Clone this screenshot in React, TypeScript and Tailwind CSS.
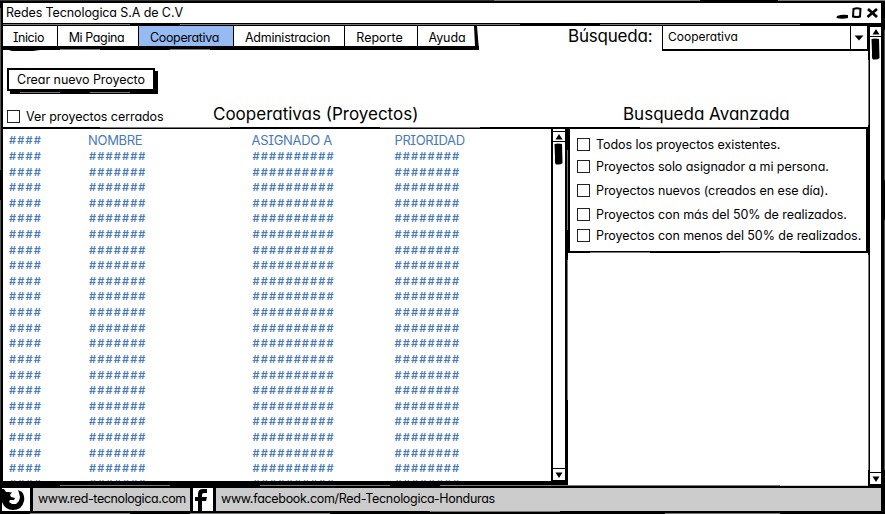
import React from "react";

const FONT = "font-['Inter','Liberation_Sans',sans-serif] [font-feature-settings:'cv11','cv08']";

function Check({ label, gap }: { label: string; gap: string }) {
  return (
    <label className={`flex h-[14px] items-center text-[12.5px] ${gap}`}>
      <span className="mr-[6px] size-[13px] shrink-0 border border-[#222] bg-white" />
      <span className="mt-[2px] tracking-[-0.06px]">{label}</span>
    </label>
  );
}

function ScrollBar() {
  return (
    <>
      <div className="flex h-[11px] shrink-0 items-center justify-center border-y-[1.5px] border-black">
        <svg width="8" height="6" viewBox="0 0 8 6"><path d="M4 0 7.5 5.5H.5Z" /></svg>
      </div>
      <svg className="ml-px mt-[1px] shrink-0" width="9" height="22" viewBox="0 0 9 22">
        <path d="M.5 1Q4 0 8 1L8.5 20Q7 22 2 21.4Q.6 21 1 15Z" />
      </svg>
      <div className="mt-auto flex h-[13px] shrink-0 items-center justify-center border-y-[1.5px] border-black">
        <svg width="8" height="6" viewBox="0 0 8 6"><path d="M.5.5H7.5L4 6Z" /></svg>
      </div>
    </>
  );
}

const columns = [
  { title: "####", cell: "####", width: "w-[80px]", head: "font-semibold text-[11px] tracking-[1.15px]" },
  { title: "NOMBRE", cell: "#######", width: "w-[163.5px]", head: "-ml-px text-[13px] tracking-[-0.3px]" },
  { title: "ASIGNADO A", cell: "##########", width: "w-[142px]", head: "-ml-px text-[13px] tracking-[-0.3px]" },
  { title: "PRIORIDAD", cell: "########", width: "w-[120px]", head: "text-[13px] tracking-[-0.4px]" },
];

const tabs = [
  { label: "Inicio", style: "w-[55px] border-r-[1.5px] pr-[3px] tracking-[-0.45px]" },
  { label: "Mi Pagina", style: "w-[81px] border-r-[1.5px] pr-[3px] tracking-[-0.4px]" },
  { label: "Cooperativa", style: "w-[95px] border-r-[1.5px] bg-[#95bbf2] pr-[3px] tracking-[-0.35px]" },
  { label: "Administracion", style: "w-[111px] border-r-[1.5px] pr-[3px] tracking-[-0.25px]" },
  { label: "Reporte", style: "w-[73px] border-r-[1.5px] pr-[3px]" },
  { label: "Ayuda", style: "w-[56px] pl-[2px] tracking-[-0.1px]" },
];

/* Lighter pencil passes that give the window frame its hand-drawn edge. */
function PencilStrokes() {
  return (
    <svg className="pointer-events-none absolute inset-0" width="885" height="514" fill="none" stroke="#777" strokeWidth="1">
      <path d="M0 .5H500" stroke="#333" />
      <path d="M494 .5H700M778 .5H885M3 24.5H130M180 24.5H420M420 24.5H520M600 24.5H800" />
      <path d="M.5 8V170M.5 200V440M884.5 30V180M884.5 220V470" stroke="#555" />
      <path d="M100 127.5H150M150 127.5H230M380 127.5H480M640 127.5H760M590 252.5H650M720 252.5H800" />
      <path d="M567.5 150V230M567.5 260V400M868.5 60V125M868.5 255V470" />
      <path d="M60 485.5H170M260 485.5H390M440 485.5H560M560 485.5H780" />
      <path d="M780 485.5H868" stroke="#ccc" />
      <path d="M30 513.5H130M190 513.5H330M430 511.5H560M665 513.5H780" />
      <path d="M60 49.5H100M170 49.5H210M20 92.5H60M90 92.5H130" />
      <path d="M0 46H3Q18 48 40 51H12Q5 49 3 47Z" fill="black" stroke="none" />
    </svg>
  );
}

export default function App() {
  return (
    <div className={`relative flex h-[514px] w-[885px] flex-col overflow-hidden whitespace-nowrap bg-white leading-none text-black ${FONT}`}>
      <div className="flex h-[485px] flex-col border-l-[3px] border-r-[4px] border-t-[3px] border-black">
        <header className="flex h-[23px] shrink-0 items-center justify-between border-b-[3px] border-black pl-[3px] text-[12.5px]">
          <span className="tracking-[-0.1px]">Redes Tecnologica S.A de C.V</span>
          <svg className="-mt-px" width="46" height="18" viewBox="0 0 46 18">
            <path d="M2 12Q7 10 13 11V14Q7 15.5 1.5 14Z" />
            <path d="M18.5 5Q22 3.5 25.5 5L25 12.5Q22 13.5 18 12.5Z" fill="none" stroke="black" strokeWidth="2" />
            <path d="M33 5 42 13M42 5 32.5 13" fill="none" stroke="black" strokeWidth="2.8" />
          </svg>
        </header>
        <div className="flex min-h-0 flex-1">
          <main className="flex w-[865px] flex-col">
            <div className="flex h-[25px] shrink-0">
              <nav className="flex h-[24px] border-b-[4px] border-black text-[12.5px]">
                {tabs.map((t) => (
                  <a key={t.label} className={`flex items-center justify-center border-black pt-[4px] ${t.style}`}>{t.label}</a>
                ))}
                <svg className="-mb-1 shrink-0" width="5" height="24" viewBox="0 0 5 24"><path d="M0 0H3L5 24H0V20H1Z" /></svg>
              </nav>
              <span className="ml-[89px] mt-[2px] text-[17px] tracking-[-0.2px]">Búsqueda:</span>
              <div className="ml-auto flex h-[25px] w-[206px] border-[1.5px] border-b-2 border-t-0 border-black text-[12px]">
                <span className="flex-1 pl-[5px] pt-[5px]">Cooperativa</span>
                <span className="flex w-[17px] items-center justify-center border-l-[1.5px] border-black">
                  <svg width="10" height="6" viewBox="0 0 10 6"><path d="M.5.5H9.5L5 5.5Z" /></svg>
                </span>
              </div>
            </div>
            <div className="flex h-[76px] shrink-0">
              <div className="flex w-[210px] flex-col pl-[4px] pt-[17px]">
                <button className="flex h-[23px] w-[148px] items-center justify-center border-2 border-black pt-[2px] text-[12.5px] tracking-[-0.05px] shadow-[3px_3px_0_black]">Crear nuevo Proyecto</button>
                <Check label="Ver proyectos cerrados" gap="mt-[18px]" />
              </div>
              <h1 className="w-[410px] pt-[55px] text-[17px]">Cooperativas (Proyectos)</h1>
              <h1 className="pt-[55px] text-[17px]">Busqueda Avanzada</h1>
            </div>
            <div className="flex min-h-0 flex-1">
              <section className="flex w-[565px] border-b-[4px] border-r-[3px] border-t-[2px] border-black">
                <div className="flex flex-1 overflow-hidden pl-[6px] pt-[3.4px] text-[#4a7ab5]">
                  {columns.map((c) => (
                    <div key={c.title} className={`shrink-0 ${c.width}`}>
                      <div className={`h-[15.62px] leading-[16px] ${c.head}`}>{c.title}</div>
                      {Array.from({ length: 22 }, (_, i) => (
                        <div key={i} className="h-[15.62px] text-[11px] font-semibold leading-[16px] tracking-[1.15px]">{c.cell}</div>
                      ))}
                    </div>
                  ))}
                </div>
                <div className="flex w-[14px] flex-col border-l-2 border-black pt-[2px]"><ScrollBar /></div>
              </section>
              <section className="h-[126px] w-[300px] border-[2.5px] border-black pl-[7px] pt-[8px]">
                <Check label="Todos los proyectos existentes." gap="" />
                <Check label="Proyectos solo asignador a mi persona." gap="mt-[8px]" />
                <Check label="Proyectos nuevos (creados en ese día)." gap="mt-[10px]" />
                <Check label="Proyectos con más del 50% de realizados." gap="mt-[10px]" />
                <Check label="Proyectos con menos del 50% de realizados." gap="mt-[7px]" />
              </section>
            </div>
          </main>
          <aside className="flex flex-1 flex-col border-l-2 border-black"><ScrollBar /></aside>
        </div>
      </div>
      <footer className="flex h-[29px] shrink-0 border-y-[3px] border-l-2 border-r-[4px] border-black bg-[#ccc] text-[12.5px]">
        <span className="w-[31px] shrink-0 border-r-[3px] border-black bg-white">
          <svg width="24" height="23" viewBox="0 0 24 23">
            <path d="M0 1 2 1 4 4 6 4 10 4.500 8 7 9 9 13 10 12 12 8 12 7 14 10 16 14 16 17 13 18 9 17 5 16 2 20 4Q23 8 22 13Q20 22 11 22Q3 22 0 14Z" />
          </svg>
        </span>
        <span className="flex w-[160px] shrink-0 items-center border-r-[3px] border-black pl-[5px] tracking-[-0.4px]">www.red-tecnologica.com</span>
        <span className="flex w-[23px] shrink-0 items-center border-r-[3px] border-black bg-white">
          <svg width="16" height="22" viewBox="0 0 16 22">
            <path d="M5 22V12H2V8H5V5Q5 0 10 0H14V4H11Q9 4 9 6V8H14L13 12H9V22Z" />
          </svg>
        </span>
        <span className="flex items-center pl-[5px] tracking-[-0.3px]">www.facebook.com/Red-Tecnologica-Honduras</span>
      </footer>
      <PencilStrokes />
    </div>
  );
}
